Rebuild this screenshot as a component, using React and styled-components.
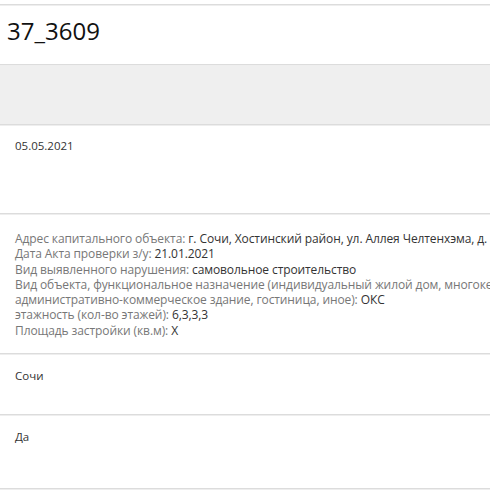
import React from 'react'
import styled, { createGlobalStyle } from 'styled-components'

const Global = createGlobalStyle`
  html, body {
    margin: 0;
    padding: 0;
    background: #fff;
    font-family: "Open Sans", "Liberation Sans", sans-serif;
  }
`;

const Page = styled.div`
  width: 490px;
  height: 490px;
  overflow: hidden;
  padding-top: 4px;
  box-sizing: border-box;
`;

const Row = styled.div`
  box-sizing: border-box;
  height: ${p => p.h}px;
  padding: ${p => p.pt || 0}px 15px 0;
  border-top: 1px solid #dcdcdc;
  box-shadow: inset 0 1px 0 #eeeeee;
  background: ${p => (p.gray ? '#efefef' : '#fff')};
  white-space: nowrap;
  overflow: hidden;
`;

const TitleRow = styled(Row)`
  padding: 0 0 0 7px;
`;

const Title = styled.h1`
  margin: 0;
  line-height: 52px;
  font-size: 24px;
  font-weight: 400;
  color: #111;
`;

const Value = styled.div`
  font-size: 11.5px;
  line-height: 15px;
  color: #333;
`;

const Info = styled.div`
  font-size: 12px;
  line-height: 15.3px;
  letter-spacing: -0.1px;
  color: #777;
`;

const Val = styled.span`
  color: #333;
`;

const lines = [
  ['Адрес капитального объекта: ', 'г. Сочи, Хостинский район, ул. Аллея Челтенхэма, д.'],
  ['Дата Акта проверки з/у: ', '21.01.2021'],
  ['Вид выявленного нарушения: ', 'самовольное строительство'],
  ['Вид объекта, функциональное назначение (индивидуальный жилой дом, многоке', ''],
  ['административно-коммерческое здание, гостиница, иное): ', 'ОКС'],
  ['этажность (кол-во этажей): ', '6,3,3,3'],
  ['Площадь застройки (кв.м): ', 'X'],
];

function App() {
  return (
    <Page>
      <Global />
      <TitleRow h={60}>
        <Title>37_3609</Title>
      </TitleRow>
      <Row h={60} gray />
      <Row h={89} pt={13}>
        <Value>05.05.2021</Value>
      </Row>
      <Row h={140} pt={17}>
        <Info>
          {lines.map(([label, value], i) => (
            <div key={i}>
              {label}
              {value && <Val>{value}</Val>}
            </div>
          ))}
        </Info>
      </Row>
      <Row h={61} pt={14}>
        <Value>Сочи</Value>
      </Row>
      <Row h={74} pt={14}>
        <Value>Да</Value>
      </Row>
      <Row h={10} />
    </Page>
  )
}

export default App
